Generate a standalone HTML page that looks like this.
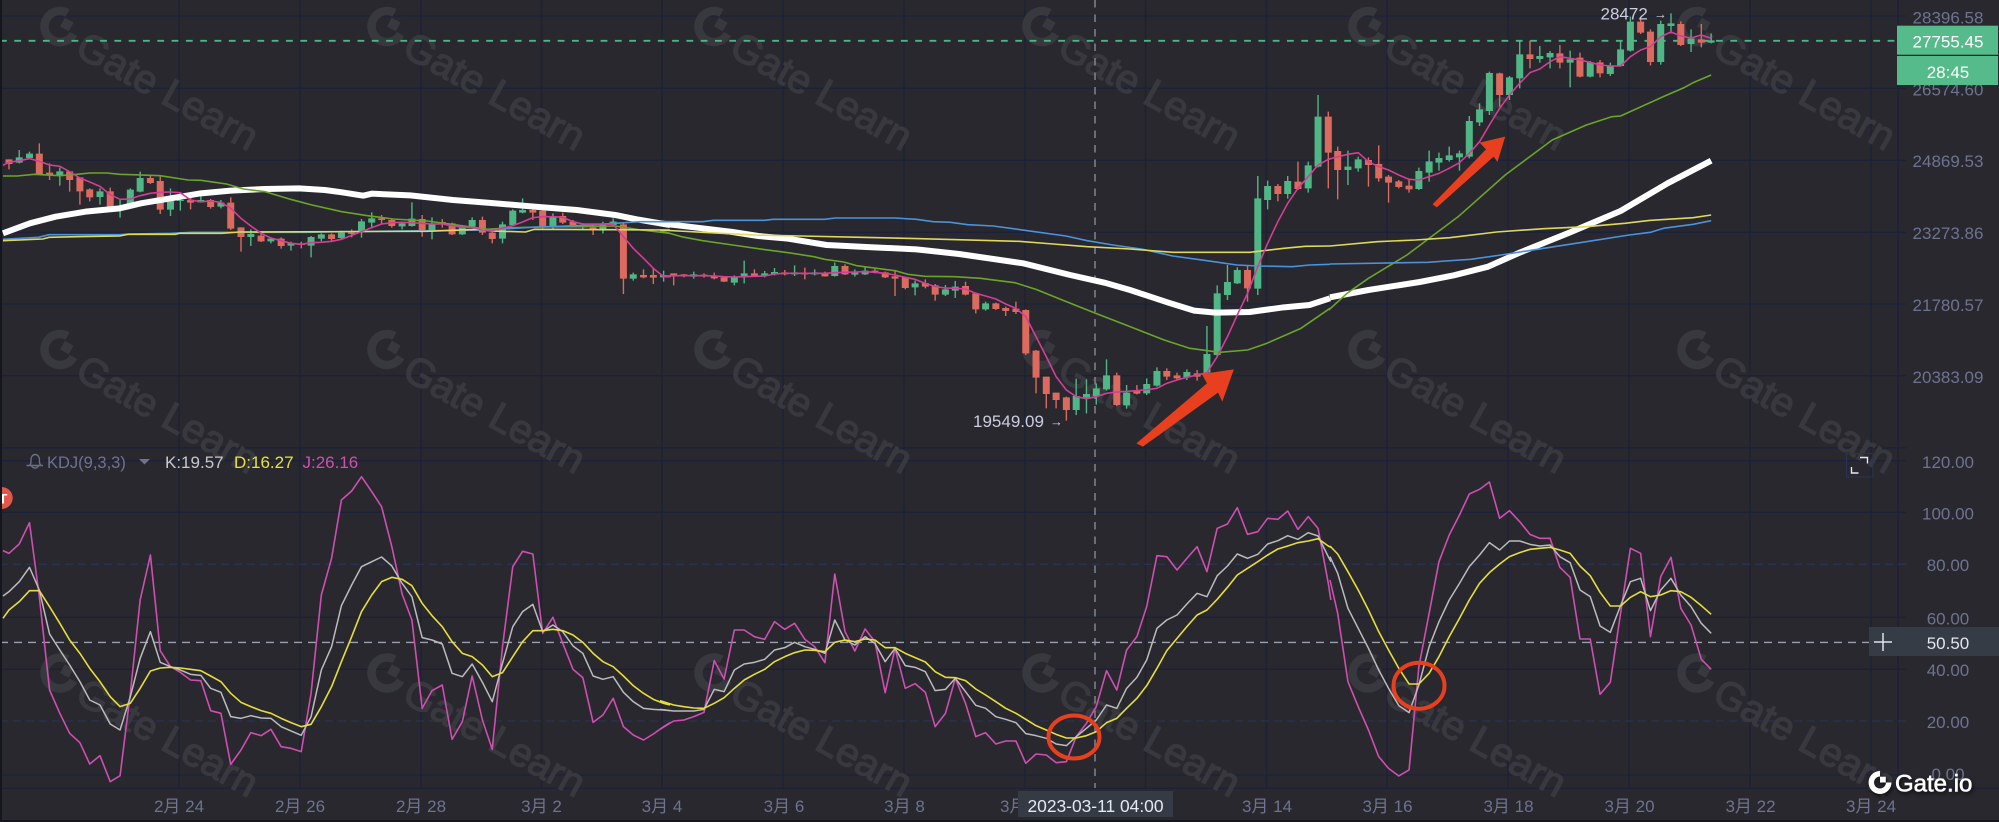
<!DOCTYPE html>
<html lang="zh">
<head>
<meta charset="utf-8">
<title>KDJ Chart</title>
<style>
html,body{margin:0;padding:0;background:#28282e;}
body{width:1999px;height:822px;overflow:hidden;}
svg{display:block;position:absolute;left:0;top:0;}
text{font-family:"Liberation Sans","Noto Sans CJK SC",sans-serif;}
.v *{vector-effect:non-scaling-stroke;fill:none;stroke-linejoin:round;}
.rw{stroke:#dc6a5e;stroke-width:1.4;}
.rb{stroke:#dc6a5e;stroke-width:7;}
.gw{stroke:#50b685;stroke-width:1.4;}
.gb{stroke:#50b685;stroke-width:7;}
.w5{stroke:#fff;stroke-width:6;}
.ma10{stroke:#6aa52a;stroke-width:1.6;}
.ma60{stroke:#4a93dc;stroke-width:1.6;}
.ma90{stroke:#e0d85a;stroke-width:1.6;}
.ma5{stroke:#d23f96;stroke-width:1.6;}
.j{stroke:#cf4fb0;stroke-width:1.6;}
.k{stroke:#bcbcbc;stroke-width:1.5;}
.d{stroke:#e6de3c;stroke-width:1.6;}
.wm path{fill:none;stroke:#38393f;stroke-width:8.5;}
.wm path.s{fill:#38393f;stroke:none;}
.wm text{fill:#38393f;stroke:#38393f;stroke-width:1.3;font-size:40px;}
.ax{fill:#6d7390;font-size:17px;text-anchor:middle;}
.wt{fill:#fff;font-size:17px;text-anchor:middle;}
.lb{fill:#c9cde0;font-size:17px;}
.circ{fill:none;stroke:#e8401f;stroke-width:4;}
</style>
</head>
<body>
<svg width="1999" height="822" viewBox="0 0 1999 822" xmlns="http://www.w3.org/2000/svg">
<rect width="1999" height="822" fill="#28282e"/>

<!-- grid -->
<g stroke="#1c2138" stroke-width="1.3" fill="none">
<path d="M0 16H1906M0 88.3H1906M0 160.3H1906M0 232.3H1906M0 304H1906M0 375.7H1906M0 447.9H1906M0 460.7H1906M0 512.3H1906M0 617.3H1906M0 669.3H1906M0 775H1906M0 788.3H1999"/>
<path d="M179 0V788M300 0V788M421 0V788M541.5 0V788M662 0V788M783 0V788M904 0V788M1025 0V788M1145.5 0V788M1266.5 0V788M1387 0V788M1508 0V788M1629 0V788M1750 0V788M1871 0V788M1898 0V788"/>
</g>
<g stroke="#2a3252" stroke-width="1.3" stroke-dasharray="8 5" fill="none">
<path d="M0 564.3H1906M0 721H1906"/>
</g>

<!-- watermarks -->
<g class="wm" transform="translate(58,26.5)"><path transform="translate(2,0) rotate(29)" d="M0-15.500A15.500 15.500 0 1 0 15.500 0"/><path class="s" transform="translate(2,0) rotate(29)" d="M0 0h10v-10h-10z"/><text transform="translate(15.5,28) rotate(29)">Gate Learn</text></g>
<g class="wm" transform="translate(385,26.5)"><path transform="translate(2,0) rotate(29)" d="M0-15.500A15.500 15.500 0 1 0 15.500 0"/><path class="s" transform="translate(2,0) rotate(29)" d="M0 0h10v-10h-10z"/><text transform="translate(15.5,28) rotate(29)">Gate Learn</text></g>
<g class="wm" transform="translate(712,26.5)"><path transform="translate(2,0) rotate(29)" d="M0-15.500A15.500 15.500 0 1 0 15.500 0"/><path class="s" transform="translate(2,0) rotate(29)" d="M0 0h10v-10h-10z"/><text transform="translate(15.5,28) rotate(29)">Gate Learn</text></g>
<g class="wm" transform="translate(1040,26.5)"><path transform="translate(2,0) rotate(29)" d="M0-15.500A15.500 15.500 0 1 0 15.500 0"/><path class="s" transform="translate(2,0) rotate(29)" d="M0 0h10v-10h-10z"/><text transform="translate(15.5,28) rotate(29)">Gate Learn</text></g>
<g class="wm" transform="translate(1366,26.5)"><path transform="translate(2,0) rotate(29)" d="M0-15.500A15.500 15.500 0 1 0 15.500 0"/><path class="s" transform="translate(2,0) rotate(29)" d="M0 0h10v-10h-10z"/><text transform="translate(15.5,28) rotate(29)">Gate Learn</text></g>
<g class="wm" transform="translate(1695,26.5)"><path transform="translate(2,0) rotate(29)" d="M0-15.500A15.500 15.500 0 1 0 15.500 0"/><path class="s" transform="translate(2,0) rotate(29)" d="M0 0h10v-10h-10z"/><text transform="translate(15.5,28) rotate(29)">Gate Learn</text></g>

<g class="wm" transform="translate(58,349.5)"><path transform="translate(2,0) rotate(29)" d="M0-15.500A15.500 15.500 0 1 0 15.500 0"/><path class="s" transform="translate(2,0) rotate(29)" d="M0 0h10v-10h-10z"/><text transform="translate(15.5,28) rotate(29)">Gate Learn</text></g>
<g class="wm" transform="translate(385,349.5)"><path transform="translate(2,0) rotate(29)" d="M0-15.500A15.500 15.500 0 1 0 15.500 0"/><path class="s" transform="translate(2,0) rotate(29)" d="M0 0h10v-10h-10z"/><text transform="translate(15.5,28) rotate(29)">Gate Learn</text></g>
<g class="wm" transform="translate(712,349.5)"><path transform="translate(2,0) rotate(29)" d="M0-15.500A15.500 15.500 0 1 0 15.500 0"/><path class="s" transform="translate(2,0) rotate(29)" d="M0 0h10v-10h-10z"/><text transform="translate(15.5,28) rotate(29)">Gate Learn</text></g>
<g class="wm" transform="translate(1040,349.5)"><path transform="translate(2,0) rotate(29)" d="M0-15.500A15.500 15.500 0 1 0 15.500 0"/><path class="s" transform="translate(2,0) rotate(29)" d="M0 0h10v-10h-10z"/><text transform="translate(15.5,28) rotate(29)">Gate Learn</text></g>
<g class="wm" transform="translate(1366,349.5)"><path transform="translate(2,0) rotate(29)" d="M0-15.500A15.500 15.500 0 1 0 15.500 0"/><path class="s" transform="translate(2,0) rotate(29)" d="M0 0h10v-10h-10z"/><text transform="translate(15.5,28) rotate(29)">Gate Learn</text></g>
<g class="wm" transform="translate(1695,349.5)"><path transform="translate(2,0) rotate(29)" d="M0-15.500A15.500 15.500 0 1 0 15.500 0"/><path class="s" transform="translate(2,0) rotate(29)" d="M0 0h10v-10h-10z"/><text transform="translate(15.5,28) rotate(29)">Gate Learn</text></g>

<g class="wm" transform="translate(58,673)"><path transform="translate(2,0) rotate(29)" d="M0-15.500A15.500 15.500 0 1 0 15.500 0"/><path class="s" transform="translate(2,0) rotate(29)" d="M0 0h10v-10h-10z"/><text transform="translate(15.5,28) rotate(29)">Gate Learn</text></g>
<g class="wm" transform="translate(385,673)"><path transform="translate(2,0) rotate(29)" d="M0-15.500A15.500 15.500 0 1 0 15.500 0"/><path class="s" transform="translate(2,0) rotate(29)" d="M0 0h10v-10h-10z"/><text transform="translate(15.5,28) rotate(29)">Gate Learn</text></g>
<g class="wm" transform="translate(712,673)"><path transform="translate(2,0) rotate(29)" d="M0-15.500A15.500 15.500 0 1 0 15.500 0"/><path class="s" transform="translate(2,0) rotate(29)" d="M0 0h10v-10h-10z"/><text transform="translate(15.5,28) rotate(29)">Gate Learn</text></g>
<g class="wm" transform="translate(1040,673)"><path transform="translate(2,0) rotate(29)" d="M0-15.500A15.500 15.500 0 1 0 15.500 0"/><path class="s" transform="translate(2,0) rotate(29)" d="M0 0h10v-10h-10z"/><text transform="translate(15.5,28) rotate(29)">Gate Learn</text></g>
<g class="wm" transform="translate(1366,673)"><path transform="translate(2,0) rotate(29)" d="M0-15.500A15.500 15.500 0 1 0 15.500 0"/><path class="s" transform="translate(2,0) rotate(29)" d="M0 0h10v-10h-10z"/><text transform="translate(15.5,28) rotate(29)">Gate Learn</text></g>
<g class="wm" transform="translate(1695,673)"><path transform="translate(2,0) rotate(29)" d="M0-15.500A15.500 15.500 0 1 0 15.500 0"/><path class="s" transform="translate(2,0) rotate(29)" d="M0 0h10v-10h-10z"/><text transform="translate(15.5,28) rotate(29)">Gate Learn</text></g>

<!-- dashed lines -->
<path d="M0 40.8H1895" stroke="#4fb386" stroke-width="1.8" stroke-dasharray="6.8 7.5" fill="none"/>
<path d="M1897 40.8h9" stroke="#fff" stroke-width="1.6"/>
<path d="M1095 0V788" stroke="#868b96" stroke-width="1.4" stroke-dasharray="7.5 7" fill="none"/>
<path d="M0 642.4H1869" stroke="#9ba0ae" stroke-width="1.4" stroke-dasharray="8 6" fill="none"/>

<!-- MAIN section 1 -->
<g class="v" transform="translate(0,0) scale(.4273,.33333)">
<path class="rw" d="M21 478V508M92 430V524M116 490V540M163 514V575M187 532V614M210 565V604M258 563V632M352 525V552M375 530V642M446 590V628M493 597V626M540 592V690M564 682V755M611 700V726M658 712V746M705 725V745M776 700V722M823 688V712M893 645V672M917 655V683M988 645V710M1035 657V683M1058 668V705M1129 650V705M1152 695V730M1247 610V660M1270 630V685M1317 638V672M1341 660V682M1388 675V705M1459 670V882M1506 808V835M1529 805V852"/>
<path class="rb" d="M21 478V492M92 461V524M116 518V526M163 514V540M187 532V574M210 568V592M258 574V628M352 534V549M375 543V629M446 600V608M493 600V621M540 608V686M564 682V711M611 707V724M658 716V738M705 730V735M776 703V717M823 698V702M893 655V660M917 660V678M988 657V692M1035 666V672M1058 670V703M1129 660V698M1152 698V717M1247 630V638M1270 632V682M1317 648V668M1341 665V677M1388 682V688M1459 673V836M1506 825V832M1529 825V833"/>
<path class="gw" d="M45 450V490M69 455V476M140 503V557M234 565V614M281 600V653M305 565V625M328 515V577M399 565V648M422 580V632M470 578V608M517 600V625M587 688V738M634 712V730M681 725V752M728 708V772M752 700V724M799 692V716M846 657V713M870 637V685M941 665V688M964 607V680M1011 652V718M1082 676V705M1105 652V682M1176 665V730M1200 628V678M1223 595V640M1294 640V690M1364 670V688M1411 665V700M1435 655V680M1482 818V842M1553 812V845"/>
<path class="gb" d="M45 472V488M69 461V474M140 514V528M234 574V591M281 620V628M305 569V620M328 534V575M399 600V629M422 600V603M470 600V607M517 608V620M587 702V711M634 716V724M681 729V737M728 711V737M752 703V716M799 698V714M846 664V695M870 655V668M941 670V679M964 656V678M1011 672V695M1082 682V703M1105 660V680M1176 673V716M1200 632V675M1223 630V638M1294 652V682M1364 678V682M1411 672V688M1435 665V675M1482 823V836M1553 825V832"/>
<polyline class="w5" points="7,700 70,670 130,650 200,635 280,625 330,610 400,595 470,580 540,572 620,567 700,565 760,570 800,577 850,587 870,581 960,586 1060,600 1150,609 1250,620 1350,630 1440,645 1490,658 1568,675"/>
<polyline class="ma10" points="7,528 40,528 80,523 140,527 180,523 210,519 250,519 280,523 310,524 375,527 440,540 470,541 530,552 570,567 620,575 680,598 730,615 800,635 860,647 920,657 1000,663 1080,677 1140,688 1200,683 1270,681 1350,680 1440,678 1500,690 1568,700"/>
<polyline class="ma60" points="7,718 90,712 115,704 280,704 300,702 400,700 450,697 720,697 800,695 1000,692 1140,690 1240,682 1350,677 1440,670 1500,665 1568,665"/>
<polyline class="ma90" points="7,722 100,717 115,712 180,710 280,708 300,703 410,703 420,700 520,700 560,696 1000,694 1120,688 1150,693 1230,696 1250,688 1568,690"/>
<polyline class="ma5" points="7,496 21,487 45,482 69,476 92,484 116,495 140,499 163,515 187,534 210,546 234,559 258,584 281,598 305,597 328,587 352,580 375,577 399,576 422,578 446,600 470,605 493,603 517,607 540,625 564,655 587,678 611,700 634,714 658,722 681,730 705,733 728,728 752,727 776,724 799,718 823,706 846,695 870,683 893,672 917,668 941,667 964,668 988,670 1011,672 1035,672 1058,677 1082,682 1105,682 1129,690 1152,692 1176,684 1200,677 1223,666 1247,653 1270,650 1294,650 1317,652 1341,665 1364,672 1388,672 1411,672 1435,673 1459,710 1482,745 1506,775 1529,805 1553,830 1570,830"/>
</g>

<!-- MAIN section 2 -->
<g class="v" transform="translate(660,0) scale(.4273,.33333)">
<path class="rw" d="M32 820V856M56 822V832M103 820V833M127 818V838M150 828V846M221 808V831M292 810V826M339 803V838M386 815V830M433 793V825M503 806V820M527 815V834M550 812V888M574 830V868M621 838V865M644 852V902M715 845V886M739 878V940M786 908V930M809 920V948M833 905V942M856 928V1065M880 1050V1180M904 1130V1225M927 1178V1225M951 1190V1262M1069 1118V1218M1116 1155V1183M1186 1105V1140M1210 1118V1140M1257 1110V1142M1375 798V905M1446 552V604M1493 485V570M1564 335V565"/>
<path class="rb" d="M32 820V828M56 823V829M103 824V830M127 827V835M150 832V845M221 820V829M292 817V823M339 818V823M386 819V829M433 798V823M503 812V818M527 817V832M550 829V836M574 832V864M621 849V860M644 856V884M715 858V884M739 880V928M786 910V927M809 924V933M833 926V936M856 930V1060M880 1052V1133M904 1130V1182M927 1178V1200M951 1192V1230M1069 1126V1215M1116 1170V1181M1186 1113V1130M1210 1126V1135M1257 1120V1130M1375 810V865M1446 558V582M1493 545V567M1564 350V458"/>
<path class="gw" d="M79 815V836M174 826V856M197 782V850M245 813V832M268 804V826M315 796V828M362 808V826M409 788V830M456 808V830M480 798V825M597 842V886M668 855V888M691 843V894M762 905V932M974 1136V1245M998 1138V1240M1021 1150V1214M1045 1078V1172M1092 1155V1226M1139 1135V1185M1163 1102V1160M1233 1108V1140M1280 978V1122M1304 856V1068M1328 795V900M1351 802V852M1399 528V885M1422 542V628M1469 528V596M1517 485V578M1540 285V502"/>
<path class="gb" d="M79 823V830M174 832V848M197 820V830M245 820V828M268 816V822M315 817V823M362 817V823M409 798V828M456 818V824M480 812V823M597 850V862M668 868V884M691 860V872M762 910V928M974 1188V1230M998 1182V1192M1021 1165V1188M1045 1126V1168M1092 1178V1216M1139 1152V1180M1163 1113V1157M1233 1116V1132M1280 1062V1118M1304 880V1065M1328 846V885M1351 810V850M1399 595V866M1422 558V600M1469 543V582M1517 496V565M1540 350V500"/>
<polyline class="w5" points="0,670 80,682 170,696 230,708 300,716 390,735 500,742 600,748 700,762 850,790 960,825 1040,848 1100,870 1190,908 1250,932 1300,938 1380,936 1460,922 1520,915 1568,895"/>
<polyline class="ma10" points="0,692 50,710 100,722 170,735 240,748 300,758 360,770 385,778 430,786 460,797 550,812 580,823 620,829 690,830 750,835 830,848 880,868 945,902 1020,940 1100,980 1180,1020 1240,1045 1310,1057 1375,1050 1420,1030 1500,985 1568,925"/>
<polyline class="ma60" points="0,665 100,665 125,661 245,661 265,658 385,658 410,654 550,654 600,658 640,665 680,667 720,674 780,678 860,692 950,708 1000,722 1060,735 1130,748 1200,768 1280,782 1350,795 1400,798 1480,800 1520,795 1568,793"/>
<polyline class="ma90" points="0,690 100,697 220,705 330,708 470,712 610,716 840,724 920,732 1000,740 1100,747 1200,757 1380,757 1460,745 1510,739 1568,738"/>
<polyline class="ma5" points="8,828 32,827 56,827 79,827 103,827 127,828 150,830 174,831 197,830 221,829 245,828 268,822 292,820 315,820 339,820 362,820 386,820 409,818 433,817 456,816 480,815 503,817 527,820 550,825 574,832 597,838 621,850 644,860 668,864 691,865 715,867 739,880 762,888 786,897 809,912 833,925 856,950 880,1010 904,1070 927,1130 951,1170 974,1190 998,1196 1021,1190 1045,1180 1069,1176 1092,1174 1116,1172 1139,1169 1163,1165 1186,1150 1210,1140 1233,1132 1257,1125 1280,1118 1304,1070 1328,1010 1351,945 1375,880 1399,800 1422,730 1446,665 1469,610 1493,565 1517,530 1540,495 1564,478 1570,475"/>
</g>

<!-- MAIN section 3 -->
<g class="v" transform="translate(1330,0) scale(.4273,.33333)">
<path class="rw" d="M18 440V598M90 472V560M114 436V545M137 525V608M161 540V565M185 535V578M397 218V320M468 122V205M538 135V205M585 158V232M632 180V232M727 55V102M750 88V196M821 64V138M869 72V142"/>
<path class="rb" d="M18 453V510M90 480V495M114 492V535M137 530V548M161 544V561M185 557V568M397 220V285M468 163V177M538 160V188M585 173V230M632 187V220M727 65V98M750 95V186M821 72V135M869 118V128"/>
<path class="gw" d="M42 452V555M66 470V515M208 503V570M232 452V545M255 458V512M279 440V485M303 452V512M326 348V475M350 310V378M373 215V345M420 228V300M444 120V265M491 138V188M515 153V205M562 152V262M609 183V232M656 188V228M680 120V200M703 50V155M774 62V194M798 40V100M845 88V156M892 100V130"/>
<path class="gb" d="M42 500V510M66 478V505M208 513V567M232 484V518M255 474V488M279 466V480M303 460V472M326 363V470M350 328V367M373 219V333M420 232V285M444 163V235M491 168V177M515 159V172M562 178V188M609 187V230M656 196V222M680 148V198M703 65V152M774 72V186M798 70V78M845 116V132M892 121V128"/>
<polyline class="w5" points="0,892 90,870 210,846 290,826 370,800 440,760 560,698 680,633 790,550 892,482"/>
<polyline class="ma10" points="-3,930 40,880 90,835 180,765 300,650 410,525 520,420 600,375 660,350 680,348 780,290 830,262 850,248 892,225"/>
<polyline class="ma60" points="0,792 230,787 270,783 330,778 400,765 500,745 600,725 700,705 750,697 780,685 850,673 892,662"/>
<polyline class="ma90" points="0,738 110,725 200,720 280,713 390,696 500,686 600,680 690,670 750,661 850,653 892,645"/>
<polyline class="ma5" points="-3,478 18,470 42,463 66,458 90,485 114,500 137,510 161,525 185,538 208,540 232,530 255,520 279,505 303,488 326,460 350,425 373,375 397,325 420,285 444,250 468,218 491,207 515,185 538,170 562,175 585,180 609,187 632,195 656,198 680,198 703,170 727,150 750,140 774,110 798,96 821,108 845,114 869,105 892,115"/>
</g>

<!-- KDJ section 1 -->
<g class="v" transform="translate(0,440) scale(.4273,.33333)">
<polyline class="j" points="7,332 21,340 45,312 69,248 92,470 116,750 140,820 163,880 187,908 210,972 234,947 258,1025 281,1007 305,760 328,480 352,345 375,632 399,680 422,697 446,720 470,722 493,812 517,820 540,973 564,930 587,878 611,887 634,868 658,920 681,925 705,935 728,760 752,465 776,355 799,180 823,153 846,110 870,155 893,200 917,320 941,462 964,540 988,805 1011,752 1035,735 1058,898 1082,845 1105,708 1129,840 1152,928 1176,620 1200,380 1223,334 1247,342 1270,580 1294,532 1317,610 1341,688 1364,713 1388,847 1411,825 1435,775 1459,860 1482,885 1506,900 1529,882 1553,860 1568,848"/>
<polyline class="k" points="7,468 21,455 45,425 69,382 92,450 116,582 140,630 163,675 187,725 210,780 234,795 258,852 281,870 305,770 328,655 352,575 375,667 399,680 422,690 446,703 470,706 493,745 517,757 540,830 564,835 587,827 611,834 634,835 658,860 681,873 705,886 728,830 752,690 776,620 799,497 823,435 846,380 870,365 893,351 917,378 941,430 964,470 988,593 1011,600 1035,612 1058,700 1082,710 1105,672 1129,727 1152,785 1176,670 1200,560 1223,515 1247,493 1270,575 1294,555 1317,575 1341,618 1364,640 1388,708 1411,718 1435,710 1459,757 1482,785 1506,805 1529,808 1553,810 1568,812"/>
<polyline class="d" points="7,535 21,510 45,485 69,452 92,452 116,500 140,550 163,600 187,640 210,685 234,725 258,770 281,800 305,790 328,745 352,693 375,684 399,682 422,684 446,688 470,692 493,708 517,725 540,760 564,787 587,800 611,812 634,820 658,835 681,848 705,860 728,853 752,800 776,740 799,665 823,590 846,515 870,465 893,425 917,412 941,418 964,437 988,490 1011,527 1035,560 1058,605 1082,640 1105,650 1129,675 1152,710 1176,698 1200,650 1223,605 1247,572 1270,572 1294,568 1317,572 1341,585 1364,607 1388,640 1411,665 1435,680 1459,708 1482,737 1506,760 1529,778 1553,790 1568,795"/>
</g>

<!-- KDJ section 2 -->
<g class="v" transform="translate(660,440) scale(.4273,.33333)">
<polyline class="j" points="0,868 32,843 56,840 79,830 103,817 127,662 150,717 174,570 197,570 221,590 245,598 268,545 292,568 315,550 339,598 362,620 386,668 409,402 433,575 456,633 480,567 503,605 527,758 550,625 574,745 597,731 621,757 644,860 668,820 691,715 715,790 739,890 762,878 786,912 809,903 833,903 856,970 880,942 904,945 927,968 951,965 974,890 998,850 1021,800 1045,692 1069,750 1092,630 1116,590 1139,500 1163,347 1186,350 1210,390 1233,355 1257,320 1280,395 1304,265 1328,252 1351,203 1375,283 1399,275 1422,235 1446,238 1469,213 1493,268 1517,230 1540,265 1564,430 1570,480"/>
<polyline class="k" points="0,808 32,813 56,813 79,813 103,808 127,748 150,755 174,690 197,672 221,667 245,658 268,630 292,623 315,607 339,620 362,628 386,640 409,540 433,600 456,615 480,590 503,610 527,665 550,625 574,677 597,682 621,695 644,752 668,748 691,715 715,755 739,796 762,805 786,830 809,838 833,848 856,881 880,887 904,895 927,912 951,917 974,890 998,865 1021,840 1045,795 1069,805 1092,745 1116,712 1139,660 1163,565 1186,540 1210,525 1233,492 1257,460 1280,470 1304,407 1328,378 1351,342 1375,355 1399,343 1422,312 1446,302 1469,287 1493,298 1517,278 1540,288 1564,350 1570,365"/>
<polyline class="d" points="0,782 32,795 56,800 79,804 103,805 127,790 150,773 174,745 197,720 221,703 245,688 268,665 292,650 315,638 339,630 362,631 386,635 409,607 433,600 456,605 480,597 503,600 527,623 550,623 574,640 597,653 621,666 644,695 668,712 691,713 715,722 739,747 762,765 786,785 809,805 833,820 856,838 880,857 904,870 927,883 951,894 974,894 998,887 1021,875 1045,848 1069,835 1092,805 1116,775 1139,737 1163,685 1186,632 1210,595 1233,560 1257,525 1280,510 1304,478 1328,442 1351,405 1375,385 1399,365 1422,345 1446,327 1469,318 1493,308 1517,303 1540,296 1564,318 1570,322"/>
</g>

<!-- KDJ section 3 -->
<g class="v" transform="translate(1330,440) scale(.4273,.33333)">
<polyline class="j" points="0,420 18,520 42,725 66,800 90,870 114,950 137,985 161,1008 185,990 208,680 232,520 255,365 279,285 303,225 326,162 350,148 373,126 397,235 420,212 444,245 468,283 491,295 515,295 538,382 562,412 585,597 609,597 632,763 656,727 680,520 703,325 727,340 750,590 774,410 798,352 821,505 845,555 869,658 892,688"/>
<polyline class="k" points="0,350 18,400 42,505 66,565 90,625 114,690 137,745 161,797 185,818 208,735 232,620 255,545 279,480 303,430 326,380 350,345 373,308 397,330 420,303 444,303 468,313 491,318 515,315 538,350 562,368 585,450 609,470 632,558 656,577 680,497 703,425 727,415 750,512 774,450 798,415 821,465 845,500 869,550 892,580"/>
<polyline class="d" points="0,318 18,342 42,395 66,450 90,510 114,575 137,630 161,685 185,732 208,732 232,700 255,650 279,590 303,535 326,480 350,430 373,398 397,372 420,350 444,338 468,328 491,325 515,322 538,330 562,340 585,378 609,407 632,457 656,498 680,498 703,472 727,455 750,470 774,465 798,452 821,455 845,472 869,497 892,523"/>
</g>

<!-- red arrows and circles -->
<g transform="translate(660,0) scale(.4273,.33333)"><polygon fill="#e8401f" points="1115,1330 1280,1150 1268,1122 1343,1108 1316,1205 1306,1178 1130,1340"/></g>
<g transform="translate(1330,0) scale(.4273,.33333)"><polygon fill="#e8401f" points="240,613 365,448 350,428 410,410 392,486 383,470 250,622"/></g>
<ellipse class="circ" cx="1074" cy="737" rx="25.5" ry="21.5"/>
<ellipse class="circ" cx="1419" cy="685.7" rx="25.5" ry="23"/>

<!-- right axis labels -->
<g class="ax">
<text x="1948" y="23.5">28396.58</text>
<text x="1948" y="95.5">26574.60</text>
<text x="1948" y="167">24869.53</text>
<text x="1948" y="239">23273.86</text>
<text x="1948" y="311">21780.57</text>
<text x="1948" y="383">20383.09</text>
<text x="1948" y="468">120.00</text>
<text x="1948" y="519.5">100.00</text>
<text x="1948" y="571">80.00</text>
<text x="1948" y="624.5">60.00</text>
<text x="1948" y="676">40.00</text>
<text x="1948" y="728">20.00</text>
<text x="1948" y="780">0.00</text>
</g>

<!-- price tags -->
<rect x="1897" y="25.7" width="101" height="29" fill="#55bb8a"/>
<rect x="1897" y="56" width="101" height="29" fill="#55bb8a"/>
<text class="wt" x="1948" y="47.7">27755.45</text>
<text class="wt" x="1948" y="78">28:45</text>

<!-- crosshair y tag -->
<rect x="1869" y="627" width="130" height="29" fill="#363c46"/>
<path d="M1883 633V651M1874 642H1892" stroke="#dfe2ea" stroke-width="1.5"/>
<text x="1948" y="649" fill="#e2e5ee" font-size="17" text-anchor="middle">50.50</text>

<!-- date labels -->
<g class="ax">
<text x="179" y="812">2月 24</text>
<text x="300" y="812">2月 26</text>
<text x="421" y="812">2月 28</text>
<text x="541.5" y="812">3月 2</text>
<text x="662" y="812">3月 4</text>
<text x="784" y="812">3月 6</text>
<text x="904.5" y="812">3月 8</text>
<text x="1025" y="812">3月 10</text>
<text x="1146" y="812">3月 12</text>
<text x="1267" y="812">3月 14</text>
<text x="1387.5" y="812">3月 16</text>
<text x="1508.5" y="812">3月 18</text>
<text x="1629.5" y="812">3月 20</text>
<text x="1750.5" y="812">3月 22</text>
<text x="1871" y="812">3月 24</text>
</g>

<!-- time tag -->
<rect x="1018" y="791" width="155" height="26" fill="#353b45"/>
<text x="1095.5" y="812" fill="#e6e8f0" font-size="17.4" text-anchor="middle">2023-03-11 04:00</text>

<!-- price annotations -->
<text class="lb" x="973" y="427">19549.09</text>
<text class="lb" x="1050" y="426" style="font-size:13px">→</text>
<text class="lb" x="1600.5" y="19.5">28472</text>
<text class="lb" x="1654" y="18.5" style="font-size:13px">→</text>

<!-- KDJ legend -->
<g fill="none" stroke="#6a7089" stroke-width="1.4">
<path d="M26.5 465.5H43M29.5 465.5c1.5-1.5 1.5-3 1.5-6a4.2 5 0 0 1 8.4 0c0 3 0 4.5 1.5 6"/>
<path d="M31.5 465.5a3.7 3.7 0 0 0 7 0"/>
</g>
<text x="47" y="468" fill="#6d7390" font-size="16.5">KDJ(9,3,3)</text>
<polygon points="139,459 150,459 144.5,464.5" fill="#6d7390"/>
<text x="165" y="468" fill="#c9c9c9" font-size="17">K:19.57</text>
<text x="234" y="468" fill="#e8e23f" font-size="17">D:16.27</text>
<text x="302.5" y="468" fill="#d04fb0" font-size="17">J:26.16</text>

<!-- T badge -->
<circle cx="1.7" cy="498" r="11" fill="#e2574a"/>
<text x="3" y="503.5" fill="#fff" font-size="14" font-weight="bold" text-anchor="middle">T</text>

<!-- expand icon -->
<rect x="1846.5" y="453.5" width="26.5" height="23.5" fill="none" stroke="#2b3254" stroke-width="1"/>
<path d="M1860 457.5h7.5v6M1851.5 467v6h7" fill="none" stroke="#e6e8ee" stroke-width="1.4"/>

<!-- Gate.io logo -->
<g style="filter:drop-shadow(1px 2px 2px rgba(0,0,0,.7))">
<path d="M1880 773.8A8.700 8.700 0 1 0 1888.7 782.5" fill="none" stroke="#fff" stroke-width="5.5"/>
<path d="M1880 782.5h5.8v-5.8h-5.8z" fill="#fff"/>
<text x="1895" y="791.5" fill="#fff" font-size="24" stroke="#fff" stroke-width=".6">Gate.io</text>
</g>

<!-- edges -->
<rect x="0" y="0" width="2" height="822" fill="#14161e"/>
<rect x="0" y="820" width="1999" height="2" fill="#14161e"/>
</svg>
</body>
</html>
